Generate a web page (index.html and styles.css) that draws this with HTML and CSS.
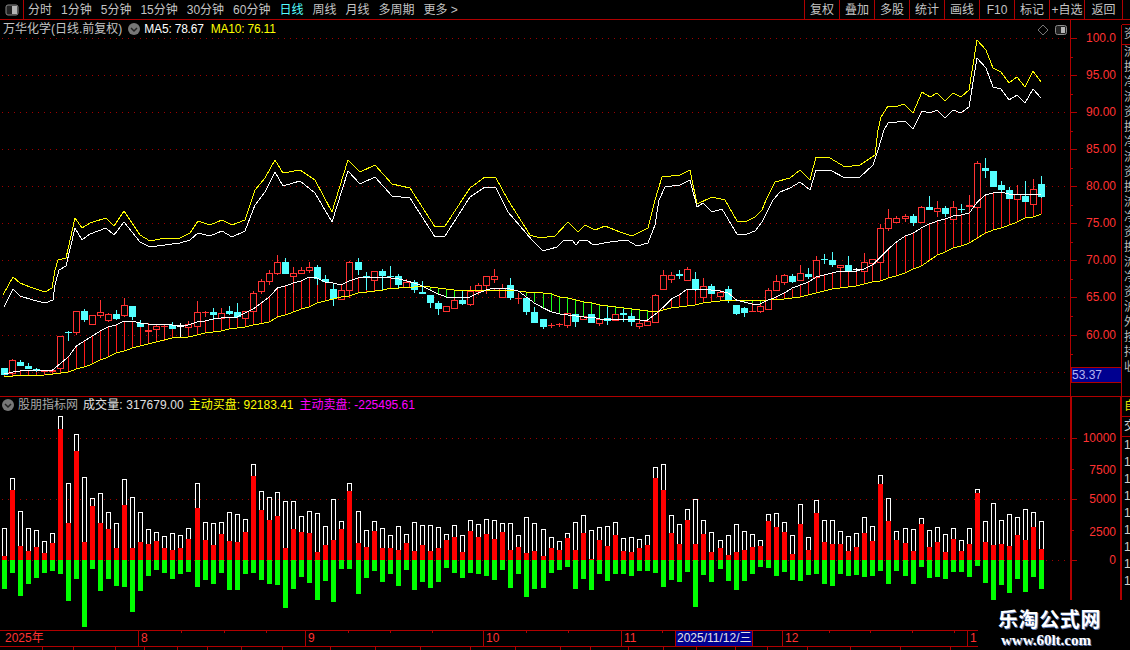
FILE: index.html
```html
<!DOCTYPE html>
<html lang="zh-CN">
<head>
<meta charset="utf-8">
<title>万华化学 日线</title>
<link rel="stylesheet" href="styles.css">
</head>
<body>
<div class="app">
  <header class="toolbar">
    <div class="layout-btn">
      <svg class="layout-icon" width="14" height="12" viewBox="0 0 14 12"><rect x="1" y="1" width="12" height="10" rx="2" fill="#222" stroke="#8a8a8a"/><rect x="7" y="2" width="5" height="8" fill="#b5b5b5"/></svg>
    </div>
    <nav class="periods">
      <span>分时</span><span>1分钟</span><span>5分钟</span><span>15分钟</span><span>30分钟</span><span>60分钟</span>
      <span class="active">日线</span><span>周线</span><span>月线</span><span>多周期</span><span class="more">更多 &gt;</span>
    </nav>
    <div class="actions">
      <span>复权</span><span>叠加</span><span>多股</span><span>统计</span><span>画线</span><span>F10</span><span>标记</span><span>+自选</span><span>返回</span>
    </div>
  </header>

  <div class="stage">
    <div class="plots">
      <section class="pane price-pane">
        <div class="legend price-legend">
          <span class="stock">万华化学(日线.前复权)</span>
          <svg class="collapse" width="12" height="12" viewBox="0 0 12 12"><circle cx="6" cy="6" r="6" fill="#777"/><path d="M3 5l3 3 3-3" fill="none" stroke="#222" stroke-width="1.5"/></svg>
          <span class="ma5">MA5: 78.67</span>
          <span class="ma10">MA10: 76.11</span>
        </div>
        <svg id="price" class="chart" width="1122" height="376" viewBox="0 20 1122 376"></svg>
      </section>

      <section class="pane volume-pane">
        <div class="legend volume-legend">
          <svg class="collapse" width="12" height="12" viewBox="0 0 12 12"><circle cx="6" cy="6" r="6" fill="#777"/><path d="M3 5l3 3 3-3" fill="none" stroke="#222" stroke-width="1.5"/></svg>
          <span class="ind-name">股朋指标网</span>
          <span class="vol">成交量: 317679.00</span>
          <span class="buy">主动买盘: 92183.41</span>
          <span class="sell">主动卖盘: -225495.61</span>
        </div>
        <svg id="volume" class="chart" width="1122" height="233" viewBox="0 397 1122 233"></svg>
      </section>

      <div class="date-row" id="dateRow">
        <span class="d d-year">2025年</span>
        <span class="d d-aug">8</span>
        <span class="d d-sep">9</span>
        <span class="d d-oct">10</span>
        <span class="d d-nov">11<b class="cursor-date">2025/11/12/三</b></span>
        <span class="d d-dec">12</span>
        <span class="d d-jan">1</span>
      </div>
      <div class="tab-strip" id="tabStrip"></div>
    </div>

    <aside class="rail">
      <div class="rail-top">
        <span class="gap"></span>
        <span class="cell">资</span>
        <span>流</span><span>换</span><span>净</span><span>流</span><span>资</span><span>换</span><span>净</span><span>流</span>
        <span>资</span><span>换</span><span>流</span><span>净</span><span>资</span><span>换</span><span>流</span><span>净</span>
        <span>资</span><span>沪</span><span>外</span><span>按</span><span>持</span><span>收</span>
      </div>
      <div class="rail-bottom">
        <span class="cell self">自</span>
        <span class="cell">交</span>
        <span>1</span><span>1</span><span>1</span><span>1</span><span>1</span><span>1</span><span>1</span><span>1</span><span>1</span>
      </div>
    </aside>
  </div>

  <div class="watermark">
    <div class="wm-cn">乐淘公式网</div>
    <div class="wm-en">www.60lt.com</div>
  </div>
</div>
<script src="chart.js"></script>
</body>
</html>
```

FILE: styles.css
```css
* { box-sizing: border-box; }
html, body { margin: 0; padding: 0; background: #000; }
body { width: 1130px; height: 650px; overflow: hidden; }

.app {
  position: relative;
  width: 1130px;
  height: 650px;
  display: flex;
  flex-direction: column;
  font: 12px/14px "Liberation Sans", "Noto Sans CJK SC", sans-serif;
  color: #c4c4c4;
  background: #000;
  overflow: hidden;
}

/* toolbar */
.toolbar {
  height: 20px;
  flex: none;
  display: flex;
  align-items: stretch;
  border-bottom: 1px solid #b00000;
}
.layout-btn {
  width: 24px;
  display: flex;
  align-items: center;
  justify-content: center;
  border-right: 1px solid #b00000;
}
.periods {
  display: flex;
  align-items: center;
  gap: 9px;
  padding-left: 4px;
  white-space: nowrap;
}
.periods .active { color: #54ffff; }
.actions {
  margin-left: auto;
  margin-right: 7px;
  display: flex;
  border-right: 1px solid #b00000;
}
.actions span {
  width: 35px;
  border-left: 1px solid #b00000;
  display: flex;
  align-items: center;
  justify-content: center;
  white-space: nowrap;
}
.actions span:last-child { width: 38px; }

/* panes */
.stage { flex: 1; display: flex; min-height: 0; }
.plots { width: 1122px; flex: none; display: flex; flex-direction: column; }
.pane { position: relative; flex: none; }
.chart { display: block; }
.price-pane { height: 377px; border-bottom: 1px solid #b00000; }
.volume-pane { height: 233px; }

.legend {
  position: absolute;
  display: flex;
  align-items: center;
  white-space: nowrap;
  height: 14px;
}
.price-legend { left: 3px; top: 2px; }
.price-legend .collapse { margin: 0 4px 0 6px; }
.ma5 { color: #fff; letter-spacing: -.2px; }
.ma10 { color: #ff0; margin-left: 7px; letter-spacing: -.2px; }
.volume-legend { left: 2px; top: 1px; }
.volume-legend .collapse { margin-right: 4px; }
.ind-name { color: #a8a8a8; }
.vol { color: #e0e0e0; margin-left: 5px; letter-spacing: .1px; }
.buy { color: #ff0; margin-left: 5px; }
.sell { color: #f0f; margin-left: 6px; }

/* date axis */
.date-row {
  position: relative;
  flex: none;
  display: flex;
  width: 978px;
  height: 17px;
  border-top: 1px solid #b00000;
  border-bottom: 1px solid #b00000;
  color: #ff3232;
  line-height: 15px;
}
.d { display: block; position: relative; padding-left: 2px; border-right: 1px solid #b00000; }
.d-year { width: 139px; padding-left: 5px; }
.d-aug { width: 167px; }
.d-sep { width: 178px; }
.d-oct { width: 138px; }
.d-nov { width: 161px; }
.d-dec { width: 185px; }
.d-jan { flex: 1; border-right: 0; }
.cursor-date {
  position: absolute;
  left: 53px;
  top: -1px;
  width: 78px;
  height: 17px;
  padding-left: 1px;
  font-weight: 400;
  line-height: 15px;
  color: #e4e4e4;
  background: #000090;
  border: 1px solid #b00000;
  white-space: nowrap;
}
.tick {
  position: absolute;
  top: 0;
  width: 1px;
  height: 2px;
  background: #b00000;
}
.tab-strip { flex: 1; width: 978px; display: flex; overflow: hidden; }
.tab-strip span { flex: none; border-right: 1px solid #b00000; }

/* right rail with clipped column */
.rail { width: 8px; flex: none; overflow: hidden; color: #b8b8b8; white-space: nowrap; }
.rail-top {
  height: 377px;
  display: flex;
  flex-direction: column;
  overflow: hidden;
  border-bottom: 1px solid #b00000;
}
.rail-top span { height: 15px; flex: none; padding-left: 2px; line-height: 15px; }
.rail-top .gap { height: 5px; border-bottom: 1px solid #b00000; }
.rail-top .cell { height: 20px; line-height: 19px; border-bottom: 1px solid #b00000; }
.rail-bottom { height: 204px; display: flex; flex-direction: column; overflow: hidden; }
.rail-bottom span { height: 17px; flex: none; padding-left: 2px; line-height: 17px; color: #d0d0d0; }
.rail-bottom .cell { height: 20px; line-height: 19px; border-bottom: 1px solid #b00000; }
.rail-bottom .self { color: #e6e600; }

/* watermark lies over the chart corner */
.watermark {
  position: absolute;
  left: 979px;
  top: 600px;
  width: 151px;
  height: 50px;
  background: #000;
  padding: 8px 0 0 19px;
}
.wm-cn {
  font: 700 20px/22px "Noto Sans CJK SC", sans-serif;
  letter-spacing: .6px;
  color: #fff;
  text-shadow: 1px 1px 0 #5a74b0;
}
.wm-en {
  margin: 2px 0 0 3px;
  font: 700 15px/16px "Liberation Serif", serif;
  color: #fff;
  text-shadow: 1px 1px 0 #5a74b0;
}
```

FILE: chart.js
```js
(function () {
  var NS = 'http://www.w3.org/2000/svg';
  function el(parent, name, attrs, text) {
    var n = document.createElementNS(NS, name);
    for (var k in attrs) n.setAttribute(k, attrs[k]);
    if (text != null) n.textContent = text;
    parent.appendChild(n);
    return n;
  }
  /* bars step 8px, with one extra pixel at these bar indices */
  var JUMPS = [24, 44, 67, 89, 112];
  function barX(k) {
    var x = 4 + 8 * k;
    JUMPS.forEach(function (j) { if (k >= j) x++; });
    return x;
  }
  var RED = '#ff3232', AXIS = '#b00000', DOT = '#a00000', CYAN = '#54ffff';

  /* candles: [type, bodyTop, bodyBottom, wickTop, wickBottom], zoom px (3x) from an offset */
  function offs(base, list) {
    return list.map(function (c) {
      return { t: c[0], a: base + c[1] / 3, b: base + c[2] / 3,
               h: base + (c[3] == null ? c[1] : c[3]) / 3,
               l: base + (c[4] == null ? c[2] : c[4]) / 3 };
    });
  }
  var candles = [].concat(
    offs(270, [
      ['c',294,315],['r',271,310,268,322],['c',277,288,270,288],['c',288,297,280,297],['c',297,301,295,305],
      ['r',301,303,300,315],['R',300,306,298,315],['r',199,295,197,310],['C',186,188,184,212],['r',124,185,124,194],
      ['c',124,150,118,155],['r',136,163],['r',127,136,91,145],['r',133,149,130,155],['c',133,147,121,150],
      ['r',106,136,85,140],['c',109,142,109,150],['c',160,170,151,172],['R',181,185,160,220],['r',169,178,163,205],
      ['R',167,169,163,212],['c',165,177,157,177],['W',168,170,160,200],['r',161,170,154,170],['r',127,169,94,170],
      ['R',126,128,124,140],['c',127,134,114,150],['r',128,145,115,150],['c',124,131,109,135],['c',127,142,100,143],
      ['r',124,145],['r',68,122,62,125]
    ]),
    offs(240, [
      ['r',124,152,117,162],['r',100,122,90,135],['r',67,100,45,106],['c',67,101,55,101],['r',100,109,82,160],
      ['r',91,100,82,100],['r',82,91,67,100],['c',82,118,76,135],['c',118,127,106,130],['c',148,178,130,197],
      ['r',151,178,145,180],['r',67,151,64,175],['c',67,90,55,106],['c',108,115,97,150],['r',94,121,94,155],
      ['c',94,107,88,150],['c',107,110,78,112],['c',109,135,103,145],['r',127,142,118,145],['c',127,150,120,160],
      ['c',157,161,124,161],['c',166,188,166,204],['c',190,206,184,224],['r',199,214],['r',181,203,172,204],
      ['c',181,191,150,194],['r',154,191,139,197],['r',136,154,130,165],['r',109,136,109,161],['r',109,116,87,130],
      ['r',143,170,133,170],['c',136,175,115,179],['R',175,178,160,191],['c',175,215,172,224],['c',217,248,202,248],
      ['c',238,260,238,266],['R',256,259,250,265],['R',253,256,250,262],['r',220,256,220,265],['c',223,247,223,262],
      ['r',229,238],['c',223,248],['r',238,250,238,258],['c',235,242,200,255],['r',223,241,223,243],
      ['c',220,224,206,245],['c',229,245,220,258],['r',250,259,240,266],['r',244,254],['r',166,245,163,250]
    ]),
    offs(200, [
      ['r',226,266,210,266],['r',226,238,217,250],['c',222,227,211,238],['r',208,239,202,239],['c',238,270,217,272],
      ['r',259,290,235,298],['c',259,282,253,282],['r',277,287,270,304],['c',268,304,259,308],['c',316,342,316,346],
      ['c',325,340,322,350],['R',333,335,310,335],['r',319,334,310,340],['r',271,328,265,330],['r',244,271,226,271],
      ['r',226,247,222,254],['c',229,246,223,250],['r',220,241,196,241],['c',222,231,205,238],['r',181,230,169,234],
      ['C',176,178,163,192],['c',181,194,157,200],['r',196,202,196,240],['c',196,213,168,214],['W',207,209,203,216],
      ['r',187,214,160,217],['r',178,190,178,240],['r',85,185,72,187],['r',55,85,27,92],['r',55,67,48,70]
    ]),
    offs(140, [
      ['r',229,235,222,246],['c',229,250,223,257],['r',202,247,198,248],['c',202,209,168,209],['r',205,212,183,230],
      ['c',205,221,199,230],['r',202,238,183,240],['C',207,209,192,220],['R',196,200,165,220],['r',70,202,64,205],
      ['c',85,92,55,115],['c',94,140],['c',136,150,124,160],['c',151,176,140,176],['r',163,178,136,178],
      ['c',167,185,124,185],['r',148,193,118,193],['c',133,172,109,175]
    ])
  );

  function seg(ox, oy, list) {
    return list.map(function (p) { return [ox + p[0] / 3, oy + p[1] / 3]; });
  }
  var ma10 = [].concat(
    seg(0, 270, [[13,322],[40,318],[134,316],[183,310],[205,307],[229,298],[253,290],[277,283],[301,270],[325,260],[349,250],[373,243],[397,235],[421,227],[445,221],[469,215],[493,209],[517,205],[541,202],[565,200],[592,195],[616,190],[640,186],[664,183],[688,177],[712,175],[736,172],[760,166]]),
    seg(260, 240, [[28,245],[52,232],[76,224],[100,215],[124,208],[148,200],[172,190],[196,183],[220,178],[244,172],[268,167],[295,160],[320,156],[344,153],[368,150],[392,145],[416,143],[440,142],[463,140],[487,139],[511,140],[535,143],[559,146],[583,149],[607,151],[631,151],[655,151],[679,150],[703,150],[727,150],[751,151],[775,152],[799,155],[823,156],[850,160],[875,163],[899,172],[923,175],[947,181],[971,186],[995,190],[1019,194],[1043,198],[1067,201],[1091,204],[1115,208],[1139,210],[1163,214],[1187,215]]),
    seg(640, 200, [[70,330],[94,325],[118,322],[142,318],[166,315],[190,310],[214,307],[241,303],[265,300],[289,301],[313,301],[337,301],[361,301],[385,300],[409,298],[433,296],[457,293],[481,292],[505,285],[529,279],[553,273],[577,268],[601,265],[625,262],[649,258],[673,253],[697,247],[721,242],[745,235],[769,228],[796,218],[820,208],[844,198]]),
    seg(900, 140, [[112,345],[136,335],[160,325],[184,318],[208,310],[232,295],[256,280],[280,270],[304,263],[328,255],[352,245],[376,235],[400,230],[424,222]])
  );
  var ma5 = [].concat(
    seg(0, 270, [[13,312],[40,305],[60,302],[110,299],[134,302],[158,300],[183,280],[205,260],[229,228],[253,212],[277,198],[301,182],[325,170],[349,165],[373,152],[397,152],[421,158],[445,162],[469,163],[493,163],[517,165],[541,167],[565,165],[592,155],[616,152],[640,148],[664,143],[688,140],[712,140],[736,128],[760,118]]),
    seg(260, 240, [[28,170],[52,145],[76,138],[100,130],[124,122],[148,112],[172,115],[196,125],[220,130],[244,135],[268,122],[295,115],[320,112],[344,113],[368,110],[392,113],[416,118],[440,122],[463,128],[487,138],[511,150],[535,163],[559,170],[583,172],[607,175],[631,170],[655,160],[679,150],[703,145],[727,143],[751,147],[775,152],[799,170],[823,188],[850,205],[875,215],[899,223],[923,225],[947,228],[971,232],[995,232],[1019,236],[1043,236],[1067,236],[1091,236],[1115,238],[1139,241],[1163,240],[1187,222]]),
    seg(640, 200, [[70,320],[94,298],[118,285],[142,267],[166,266],[190,266],[214,270],[241,272],[265,280],[289,300],[313,307],[337,311],[361,312],[385,300],[409,290],[433,278],[457,265],[481,255],[505,245],[529,232],[553,224],[577,218],[601,212],[625,212],[649,212],[673,207],[697,195],[721,170],[745,148],[769,125],[796,108],[820,100],[844,85]]),
    seg(900, 140, [[88,252],[112,242],[136,238],[160,228],[184,224],[208,220],[232,185],[256,165],[280,158],[304,155],[328,162],[352,162],[376,163],[400,163],[424,163]])
  );
  var upperY = [[3,295],[13,277],[20,283],[30,287],[45,292],[52,288],[55,270],[58,260],[66,258],[75,218],[82,228],[90,223],[106,218],[114,226],[124,211],[140,235],[150,241],[165,238],[180,238],[190,233],[198,221],[210,225],[222,220],[232,225],[245,220],[255,190],[265,178],[275,160],[283,173],[300,170],[315,180],[332,212],[348,160],[360,172],[375,165],[392,184],[410,188],[435,227],[445,226],[470,188],[485,177],[496,178],[508,200],[530,235],[540,238],[555,236],[568,222],[578,232],[585,225],[595,230],[605,226],[620,232],[632,236],[640,232],[648,228],[655,200],[662,177],[680,175],[690,170],[697,204],[712,197],[725,200],[737,221],[747,221],[755,217],[762,210],[766,200],[775,182],[790,178],[800,170],[810,180],[816,157],[830,158],[845,167],[860,165],[875,155],[878,130],[881,117],[888,106],[898,106],[904,104],[913,113],[922,92],[930,97],[937,93],[945,101],[953,93],[961,97],[969,90],[977,40],[986,50],[993,68],[1001,72],[1009,83],[1017,77],[1025,87],[1033,71],[1041,82]];
  var upperW = [[4,307],[13,289],[20,296],[33,300],[45,303],[53,300],[55,285],[59,270],[66,266],[75,228],[82,240],[90,234],[106,228],[114,235],[124,222],[140,242],[150,247],[165,245],[180,243],[190,240],[198,233],[210,236],[222,231],[232,237],[245,231],[255,205],[265,192],[275,172],[283,186],[300,181],[315,193],[332,222],[348,171],[360,184],[375,177],[392,196],[410,198],[435,237],[445,236],[470,197],[485,187],[496,188],[508,212],[532,240],[543,251],[557,247],[564,240],[572,240],[576,245],[580,240],[587,240],[593,245],[610,242],[627,240],[637,246],[648,243],[655,225],[659,200],[665,187],[680,185],[690,180],[697,207],[703,203],[712,212],[722,209],[737,234],[747,234],[755,231],[762,222],[773,200],[780,192],[790,188],[800,182],[810,190],[816,170],[830,170],[845,178],[860,177],[873,165],[878,150],[884,130],[888,123],[897,122],[905,121],[913,129],[922,111],[930,113],[937,110],[945,118],[953,110],[961,113],[969,107],[977,58],[986,68],[993,87],[1001,89],[1009,100],[1017,95],[1025,103],[1033,89],[1041,98]];

  function interp(line, x) {
    if (x <= line[0][0]) return line[0][1];
    for (var i = 1; i < line.length; i++) {
      if (x <= line[i][0]) {
        var p = line[i - 1], q = line[i];
        return p[1] + (q[1] - p[1]) * (x - p[0]) / (q[0] - p[0]);
      }
    }
    return line[line.length - 1][1];
  }
  function poly(svg, line, color) {
    el(svg, 'polyline', { points: line.map(function (p) { return p[0] + ',' + Math.round(p[1]); }).join(' '),
      fill: 'none', stroke: color, 'stroke-width': 1, 'shape-rendering': 'crispEdges' });
  }
  function vline(svg, x, y1, y2, color, w) {
    el(svg, 'rect', { x: x, y: y1, width: w || 1, height: Math.max(y2 - y1, 1), fill: color, 'shape-rendering': 'crispEdges' });
  }
  function hline(svg, x1, x2, y, color) {
    el(svg, 'rect', { x: x1, y: y, width: x2 - x1, height: 1, fill: color, 'shape-rendering': 'crispEdges' });
  }
  function dots(svg, y) {
    for (var x = 2; x < 1070; x += 6) {
      el(svg, 'rect', { x: x, y: y, width: 1, height: 1, fill: DOT, 'shape-rendering': 'crispEdges' });
    }
  }
  function label(svg, x, y, text, color, anchor) {
    el(svg, 'text', { x: x, y: y + 4, fill: color || RED, 'text-anchor': anchor || 'end',
      'font-family': '"Liberation Sans", sans-serif', 'font-size': 12 }, text);
  }

  /* ---------- price pane ---------- */
  var price = document.getElementById('price');
  var levels = [[38,'100.0'],[75,'95.00'],[112,'90.00'],[149,'85.00'],[186,'80.00'],[223,'75.00'],[260,'70.00'],[297,'65.00'],[335,'60.00'],[372,null]];
  levels.forEach(function (l) { dots(price, l[0]); });
  vline(price, 1070, 20, 396, AXIS);
  vline(price, 1121, 25, 396, AXIS);
  levels.forEach(function (l, i) {
    hline(price, 1071, 1077, l[0], AXIS);
    if (i < levels.length - 1) hline(price, 1071, 1073, Math.round((l[0] + levels[i + 1][0]) / 2), AXIS);
    if (l[1]) label(price, 1116, l[0], l[1]);
  });

  for (var k = 0; k < candles.length; k++) {
    var x = barX(k), y5 = interp(ma5, x), y10 = interp(ma10, x);
    vline(price, x, Math.round(Math.min(y5, y10)), Math.round(Math.max(y5, y10)), y5 < y10 ? '#ff1a1a' : '#1aff1a');
  }
  candles.forEach(function (c, k) {
    var x = barX(k), up = c.t === 'r' || c.t === 'R';
    var col = up ? RED : (c.t === 'W' ? '#fff' : CYAN);
    vline(price, x, Math.round(c.h), Math.round(c.l), col);
    var top = Math.round(c.a), h = Math.max(Math.round(c.b) - top, 1);
    if (c.t === 'r') {
      el(price, 'rect', { x: x - 3 + .5, y: top + .5, width: 6, height: h, fill: '#000', stroke: col, 'shape-rendering': 'crispEdges' });
    } else {
      el(price, 'rect', { x: x - 3, y: top, width: 7, height: h, fill: col, 'shape-rendering': 'crispEdges' });
    }
  });
  poly(price, ma10, '#ffff00');
  poly(price, ma5, '#ffffff');
  poly(price, upperY, '#ffff00');
  poly(price, upperW, '#ffffff');

  /* top-right pane controls */
  el(price, 'path', { d: 'M1043 25l5 5-5 5-5-5z', fill: 'none', stroke: '#777' });
  el(price, 'rect', { x: 1055.5, y: 25.5, width: 11, height: 9, rx: 2, fill: '#222', stroke: '#8a8a8a' });
  el(price, 'rect', { x: 1061, y: 27, width: 4, height: 6, fill: '#b5b5b5' });

  /* cursor price tag */
  el(price, 'rect', { x: 1071.5, y: 367.5, width: 50, height: 15, fill: '#000090', stroke: AXIS, 'shape-rendering': 'crispEdges' });
  label(price, 1072, 375, '53.37', '#b4b4f0', 'start');

  /* ---------- volume pane ---------- */
  var vols = [
    [355,438,537],[205,240,489],[304,408,558],[355,423,522],[361,411,504],[394,429,489],[370,399,483],[19,57,492],[220,339,573],[73,123,507],
    [202,396,651],[265,288,477],[250,339,543],[307,357,507],[340,414,528],[208,285,531],[262,414,606],[307,396,543],[358,402,498],[367,393,480],
    [379,414,489],[370,420,507],[376,414,492],[355,387,486],[220,294,531],[337,390,510],[340,405,522],[337,372,489],[307,393,540],[313,396,540],
    [328,366,492],[163,198,489],[244,300,510],[262,330,522],[247,318,525],[274,414,594],[274,357,537],[319,366,501],[304,369,519],[310,426,570],
    [349,405,513],[268,390,576],[334,357,477],[220,243,477],[304,399,552],[361,411,504],[334,363,483],[355,414,516],[376,414,492],[349,420,528],
    [373,399,480],[337,423,540],[346,405,516],[346,423,534],[352,414,516],[373,390,474],[346,381,489],[376,426,504],[331,363,489],[343,381,492],
    [328,372,498],[331,387,510],[340,366,480],[340,420,534],[376,411,492],[322,429,561],
    [340,423,537],[358,438,534],[382,414,489],[394,420,480],[370,384,471],[337,420,537],[316,369,507],[361,447,540],[352,390,492],[349,408,513],
    [337,375,492],[385,423,492],[382,426,498],[388,414,483],[376,405,483],[172,204,489],[163,240,531],[316,369,510],[343,402,516],[298,330,486],
    [268,402,591],[331,372,495],[367,426,516],[391,414,477],[376,435,513],[343,426,540],[364,420,513],[373,411,492],[391,408,471],[313,333,474],
    [310,351,498],[337,366,486],[376,432,510],[283,342,513],[382,420,495],[271,309,492],[331,396,522],[331,402,528],[364,402,492],[379,423,498],
    [370,411,495],[322,369,501],[349,393,498],[196,222,483],[265,333,522],[364,390,483],[355,399,498],[358,423,522],[325,342,471],[361,411,504],
    [352,396,501],[373,426,507],[355,387,486],[391,423,486],[355,402,501],[238,249,468],[334,396,519],[280,405,570],[331,402,525],[313,408,549],
    [322,375,507],[298,390,546],[307,351,501],[334,417,537]
  ];
  var volume = document.getElementById('volume');
  [438, 499, 560].forEach(function (y) { dots(volume, y); });
  vline(volume, 1070, 397, 600, AXIS, 2);
  vline(volume, 1120, 397, 600, AXIS, 2);
  [[438,'10000'],[469,'7500'],[499,'5000'],[530,'2500'],[560,'0']].forEach(function (l, i) {
    hline(volume, 1072, i % 2 ? 1074 : 1077, l[0], AXIS);
    label(volume, 1116, l[1] === '7500' ? 470 : (l[1] === '2500' ? 532 : l[0]), l[1]);
  });
  vols.forEach(function (v, k) {
    var x = barX(k) - 2;
    var wt = Math.round(410 + v[0] / 3), rt = Math.round(410 + v[1] / 3), gb = Math.round(410 + v[2] / 3);
    el(volume, 'rect', { x: x + .5, y: wt + .5, width: 4, height: 560 - wt, fill: 'none', stroke: '#fff', 'shape-rendering': 'crispEdges' });
    el(volume, 'rect', { x: x, y: rt, width: 5, height: 560 - rt, fill: '#ff0000', 'shape-rendering': 'crispEdges' });
    el(volume, 'rect', { x: x, y: 560, width: 5, height: gb - 560, fill: '#00ff00', 'shape-rendering': 'crispEdges' });
  });

  /* ---------- date axis details ---------- */
  var row = document.getElementById('dateRow');
  [181, 224, 266, 348, 390, 432, 526, 568, 662, 829, 870, 912, 954].forEach(function (x) {
    var t = document.createElement('i');
    t.className = 'tick';
    t.style.left = x + 'px';
    row.appendChild(t);
  });
  var strip = document.getElementById('tabStrip');
  var prev = 0;
  [42, 73, 115, 144, 177, 207, 241, 282, 330, 375, 420, 470, 515, 560, 590, 628, 663, 696, 735, 767, 807, 850, 900, 950].forEach(function (x) {
    var s = document.createElement('span');
    s.style.width = (x - prev + 1) + 'px';
    prev = x + 1;
    strip.appendChild(s);
  });
})();
```
